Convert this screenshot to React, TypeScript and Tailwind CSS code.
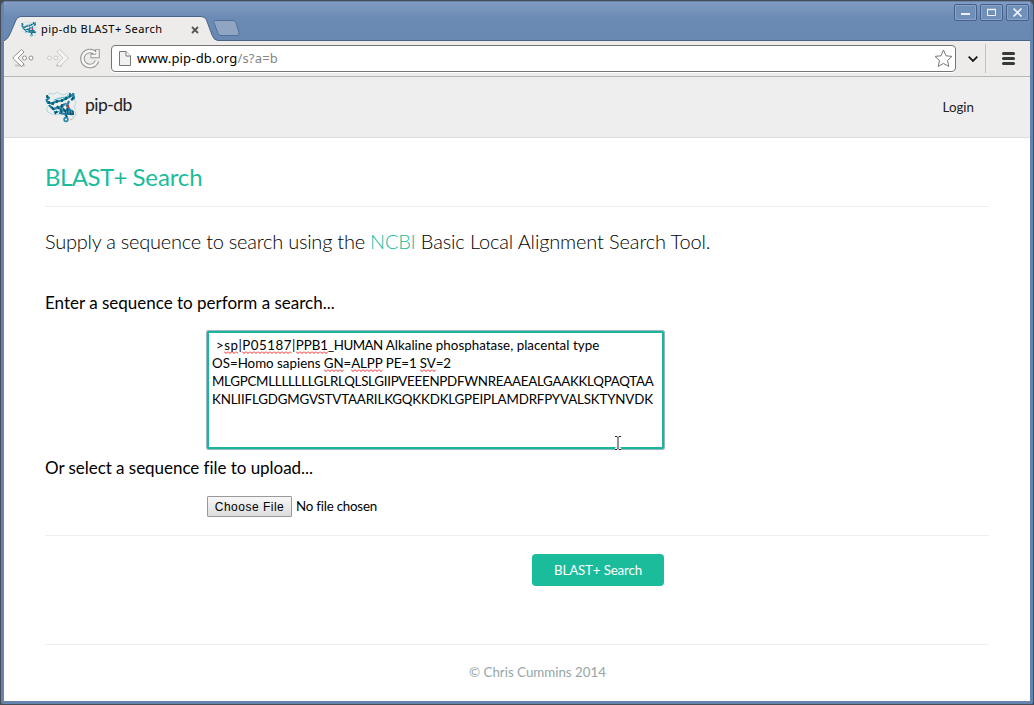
import type { ReactNode } from "react";

function Protein({ className }: { className: string }) {
  return (
    <svg viewBox="0 0 32 32" className={className} fill="none" strokeLinecap="butt" strokeLinejoin="round">
      <path d="M2 5 4 2.500l5 .5 3-2 5 3 4-1 3-1.500M29 8l2 4-2 4 1.500 3M4 14l-2.500 3 1 4 5 2.500M8 23l3 1 3-1M24 21l5 6-3 2M30 20l1 4-3 2" stroke="#b5d6dc" strokeWidth="1" />
      <path d="M2 5l2 2-2.500 2L3 12l5 0M6 13l5-2.500 6-1 7-3.500 5-3M28 2l1 5-3 2M4 14l4 4 7-2 5-3M15 16l2 4 6-1 5 1M9 21l4 0M14 22l6 1 9 0M24 10l-2 5 3 4M20 23l2 3" stroke="#1782a5" strokeWidth="2.200" />
      <path d="M9 9l6-2 6-1 4-3M8 19l7-2 4-2M10 21l7-1 6 1 6 1" stroke="#49afca" strokeWidth="1" />
      <path d="M2 4v3M4 10v3M8 11v3M12 9v3M17 8v3M21 6v3M25 2v4M28 6l-1 3M7 16l2 3M12 15l2 3M17 13v4M15 18l2 4M18 17l3 5M22 17l1 6M25 20l1 4M28 20v4M12 20l-2 3M21 24l1 3" stroke="#07536f" strokeWidth="1.600" />
      <circle cx="21" cy="28.500" r="1.900" stroke="#238cad" strokeWidth="1.600" />
      <path d="M20 14l3-1M20 12l3 2" stroke="#7774a5" strokeWidth="1.300" />
      <path d="M23 14v3" stroke="#e32d35" strokeWidth="2" />
      <path d="M25 29l2-1" stroke="#edaa76" strokeWidth="1" />
    </svg>
  );
}

function WindowButton({ children }: { children: ReactNode }) {
  return (
    <button className="flex h-[17px] w-[23px] items-center justify-center rounded-[2px] border border-[#45618b] bg-[#7190b9] shadow-[inset_0_0_0_1px_#8ba5c8]">
      <svg width="13" height="13" viewBox="0 0 13 13" fill="none" stroke="#edf3fb">
        {children}
      </svg>
    </button>
  );
}

function Misspelt({ children }: { children: ReactNode }) {
  return (
    <span className="relative">
      {children}
      <svg className="absolute -bottom-[1px] left-0 h-[3px] w-full">
        <defs>
          <pattern id="squiggle" width="4" height="3" patternUnits="userSpaceOnUse">
            <path d="M0 .5 2 2.5 4 .5" fill="none" stroke="#f02020" strokeWidth="1" />
          </pattern>
        </defs>
        <rect width="100%" height="3" fill="url(#squiggle)" />
      </svg>
    </span>
  );
}

function TitleBar() {
  return (
    <div className="flex h-[39px] shrink-0 justify-between bg-linear-to-b from-[#829cc0] via-[#6b8bb4] via-40% to-[#6888b1]">
      <div className="relative mt-[14px] h-[25px] w-[236px]">
        <svg className="absolute left-0 top-0" width="236" height="25" viewBox="0 0 236 25">
          <path d="M210.500 4.500h18.500q2 0 3 2l3 10q.5 3-2 3h-16q-2 0-3-2l-4-11q-.5-2 .5-2z" fill="#8fa5c2" stroke="#506f99" />
          <path d="M0 25Q4 23 6 18L12 4Q13.500.500 17 .5H197Q201 .5 202.500 4L208 19Q210 24.500 214 24.500V25z" fill="#edecea" />
          <path d="M0 25Q4 23 6 18L12 4Q13.500.500 17 .5H197Q201 .5 202.500 4L208 19Q210 24.500 214 24.500H236" fill="none" stroke="#496488" />
        </svg>
        <div className="relative flex h-[26px] items-center pl-[17px]">
          <Protein className="size-4" />
          <span className="ml-1 w-[150px] whitespace-nowrap font-['Noto_Sans',sans-serif] text-[11px] tracking-[0.46px] text-black">pip-db BLAST+ Search</span>
          <svg className="mt-0.5" width="8" height="8" viewBox="0 0 8 8"><path d="m1 1 6 6m0-6L1 7" stroke="#555" strokeWidth="1.8" /></svg>
        </div>
      </div>
      <div className="flex flex-1 items-start justify-end gap-[3px] border-b border-[#496488] pr-px pt-[2px]">
        <WindowButton><path d="M2 8h9" strokeWidth="2" /></WindowButton>
        <WindowButton><path d="M2.500 3.500h8v6h-8z" strokeWidth="1" /><path d="M2 3.500h9" strokeWidth="1.500" /></WindowButton>
        <WindowButton><path d="m2.500 2.500 8 8m0-8-8 8" strokeWidth="1.700" /></WindowButton>
      </div>
    </div>
  );
}

function Toolbar() {
  return (
    <div className="flex h-[36px] shrink-0 items-center border-b border-[#b4b8b5] bg-[#edecea]">
      <svg width="107" height="35" viewBox="0 0 107 35" fill="none">
        <path d="M11 24.500h10M52 24.500h6M81 25.500h10" stroke="#c6c5c2" strokeWidth="2" />
        <g stroke="#92918f" fill="#fff">
          <path d="m17.500 8.500 2.500 2.500-6 6 6 6-2.500 2.500L9.500 18q-1-1 0-2z" />
          <circle cx="20.500" cy="17" r="2" /><circle cx="27" cy="17" r="2" />
        </g>
        <g stroke="#cac9c6" fill="#f5f4f2">
          <path d="m55.500 8.500-2.500 2.500 6 6-6 6 2.500 2.500 8-7.500q1-1 0-2z" />
          <circle cx="45.500" cy="17" r="2" /><circle cx="52" cy="17" r="2" />
        </g>
        <path d="M93 20a7.500 7.500 0 1 1-1.500-7.500M93.500 8v7h-7" stroke="#929290" strokeWidth="4.500" />
        <path d="M93 20a7.500 7.500 0 1 1-1.500-7.500M93.500 8.800v6.200h-6.200" stroke="#f7f7f5" strokeWidth="2.500" />
      </svg>
      <div className="flex h-[27px] w-[845px] items-center rounded-[4px] border border-[#747674] bg-white shadow-[0_1px_0_#fff]">
        <svg className="ml-[7px]" width="12" height="15" viewBox="0 0 12 15"><path d="M.5.500H7L11.500 5v9.500H.5z" fill="#f1f1f1" stroke="#777" /><path d="M7 .5V5h4.500" fill="#fff" stroke="#777" /></svg>
        <span className="ml-[6px] font-['Noto_Sans',sans-serif] text-[13px] tracking-[0.19px] text-black">www.pip-db.org<span className="text-[#858585]">/s?a=b</span></span>
        <svg className="ml-auto mr-[2px]" width="19" height="19" viewBox="0 0 19 19"><path d="m9.500 1 2.500 5.800 6 .6-4.500 4.100 1.300 6-5.300-3.100-5.300 3.100 1.300-6L1 7.400l6-.6z" fill="#fff" stroke="#777" strokeLinejoin="round" /></svg>
      </div>
      <svg className="ml-[12px]" width="10" height="6" viewBox="0 0 10 6"><path d="M.7.700 5 5 9.300.700" fill="none" stroke="#151515" strokeWidth="1.800" /></svg>
      <div className="ml-[7px] h-[29px] w-px bg-[#c3c2bf]" />
      <div className="ml-4 flex w-[13px] flex-col gap-[2px]">
        <i className="h-[3px] rounded-xs bg-[#363b3a]" /><i className="h-[3px] rounded-xs bg-[#363b3a]" /><i className="h-[3px] rounded-xs bg-[#363b3a]" />
      </div>
    </div>
  );
}

export default function App() {
  return (
    <div className="h-[705px] w-[1034px] overflow-hidden bg-[#484d55] p-px font-['Lato',sans-serif] text-black">
      <div className="flex h-[703px] flex-col overflow-hidden rounded-t-[5px] rounded-b-[2px] border-x-[3px] border-t border-b-[3px] border-[#6584af] bg-white">
        <TitleBar />
        <Toolbar />
        <header className="flex h-[61px] shrink-0 items-center justify-between border-b border-[#ddd] bg-[#eee] pl-[41px] pr-[56px] text-[#222]">
          <a className="flex items-center"><Protein className="size-8" /><span className="-mt-1 ml-2 text-[17.5px] leading-6 tracking-[-0.5px]">pip-db</span></a>
          <a className="pt-0.5 text-[13.333px]">Login</a>
        </header>
        <main className="mx-[41px] mt-[21px] flex flex-col">
          <h1 className="h-[48px] border-b border-[#eee] text-[24px] leading-[36px] tracking-[-0.32px] text-[#1abc9c]"><span className="tracking-[-0.55px]">BLAST+ </span><span className="tracking-[-0.12px]">Search</span></h1>
          <p className="mt-[19px] text-[20px] font-light leading-[30px] tracking-[-0.14px]"><span className="tracking-[-0.24px]">Supply a sequence to search using the </span><a className="tracking-[-0.25px] text-[#1abc9c]">NCBI</a> Basic Local Alignment Search Tool.</p>
          <h2 className="mt-[35px] text-[17px] leading-6">Enter a sequence to perform a search...</h2>
          <div className="relative ml-[162px] mt-[16px] h-[118px] w-[457px] whitespace-pre rounded-[1px] border-2 border-[#1bb69a] px-[3px] pt-[3px] text-[13.333px] leading-[18px] outline outline-[#9bb7c5]">
            <div><span className="tracking-[0.5px]"> &gt;<Misspelt>sp</Misspelt>|<Misspelt>P05187</Misspelt>|</span><Misspelt>PPB1</Misspelt><span className="tracking-[-0.5px]">_HUMAN </span><span className="tracking-[0.04px]">Alkaline phosphatase, placental type</span></div>
            <div>OS=Homo sapiens <span className="tracking-[-0.12px]"><Misspelt>GN</Misspelt>=<Misspelt>ALPP</Misspelt> PE=1 <Misspelt>SV</Misspelt>=2</span></div>
            <div className="tracking-[-0.26px]">MLGPCMLLLLLLLGLRLQLSLGIIPVEEENPDFWNREAAEALGAAKKLQPAQTAA</div>
            <div className="tracking-[-0.16px]">KNLIIFLGDGMGVSTVTAARILKGQKKDKLGPEIPLAMDRFPYVALSKTYNVDK</div>
            <svg className="absolute left-[405px] top-[102px]" width="8" height="16" viewBox="0 0 8 16"><path d="M1 2h2l1 1 1-1h2M4 3v10M1 14h2l1-1 1 1h2" fill="none" stroke="#fff" strokeWidth="3" /><path d="M1 1.500h2l1 1 1-1h2M4 2.500v11M1 14.500h2l1-1 1 1h2" fill="none" stroke="#222" /></svg>
          </div>
          <h2 className="mt-[7px] text-[17px] leading-6 tracking-[-0.04px]">Or select a sequence file to upload...</h2>
          <div className="ml-[162px] mt-4 flex h-[21px] items-center text-[13.333px]">
            <button className="h-[21px] w-[85px] whitespace-nowrap rounded-[1px] border border-[#999] bg-linear-to-b from-[#f7f7f7] to-[#ddd] font-['Liberation_Sans',sans-serif] text-[12px] leading-[18px] tracking-[0.5px]">Choose File</button>
            <span className="ml-1 tracking-[-0.22px]">No file chosen</span>
          </div>
          <div className="mt-[18px] border-t border-[#eee] pl-[487px] pt-[18px]">
            <button className="h-8 w-[132px] rounded-[4px] bg-[#1abc9c] pt-px text-[13.333px] tracking-[-0.15px] text-white">BLAST+ Search</button>
          </div>
        </main>
        <footer className="mx-[41px] mt-[58px] border-t border-[#eee] pl-[41px] pt-[17px] text-center text-[13.333px] leading-[20px] text-[#95a5a6]">
          <span>© Chris Cummins 2014</span>
        </footer>
      </div>
    </div>
  );
}
